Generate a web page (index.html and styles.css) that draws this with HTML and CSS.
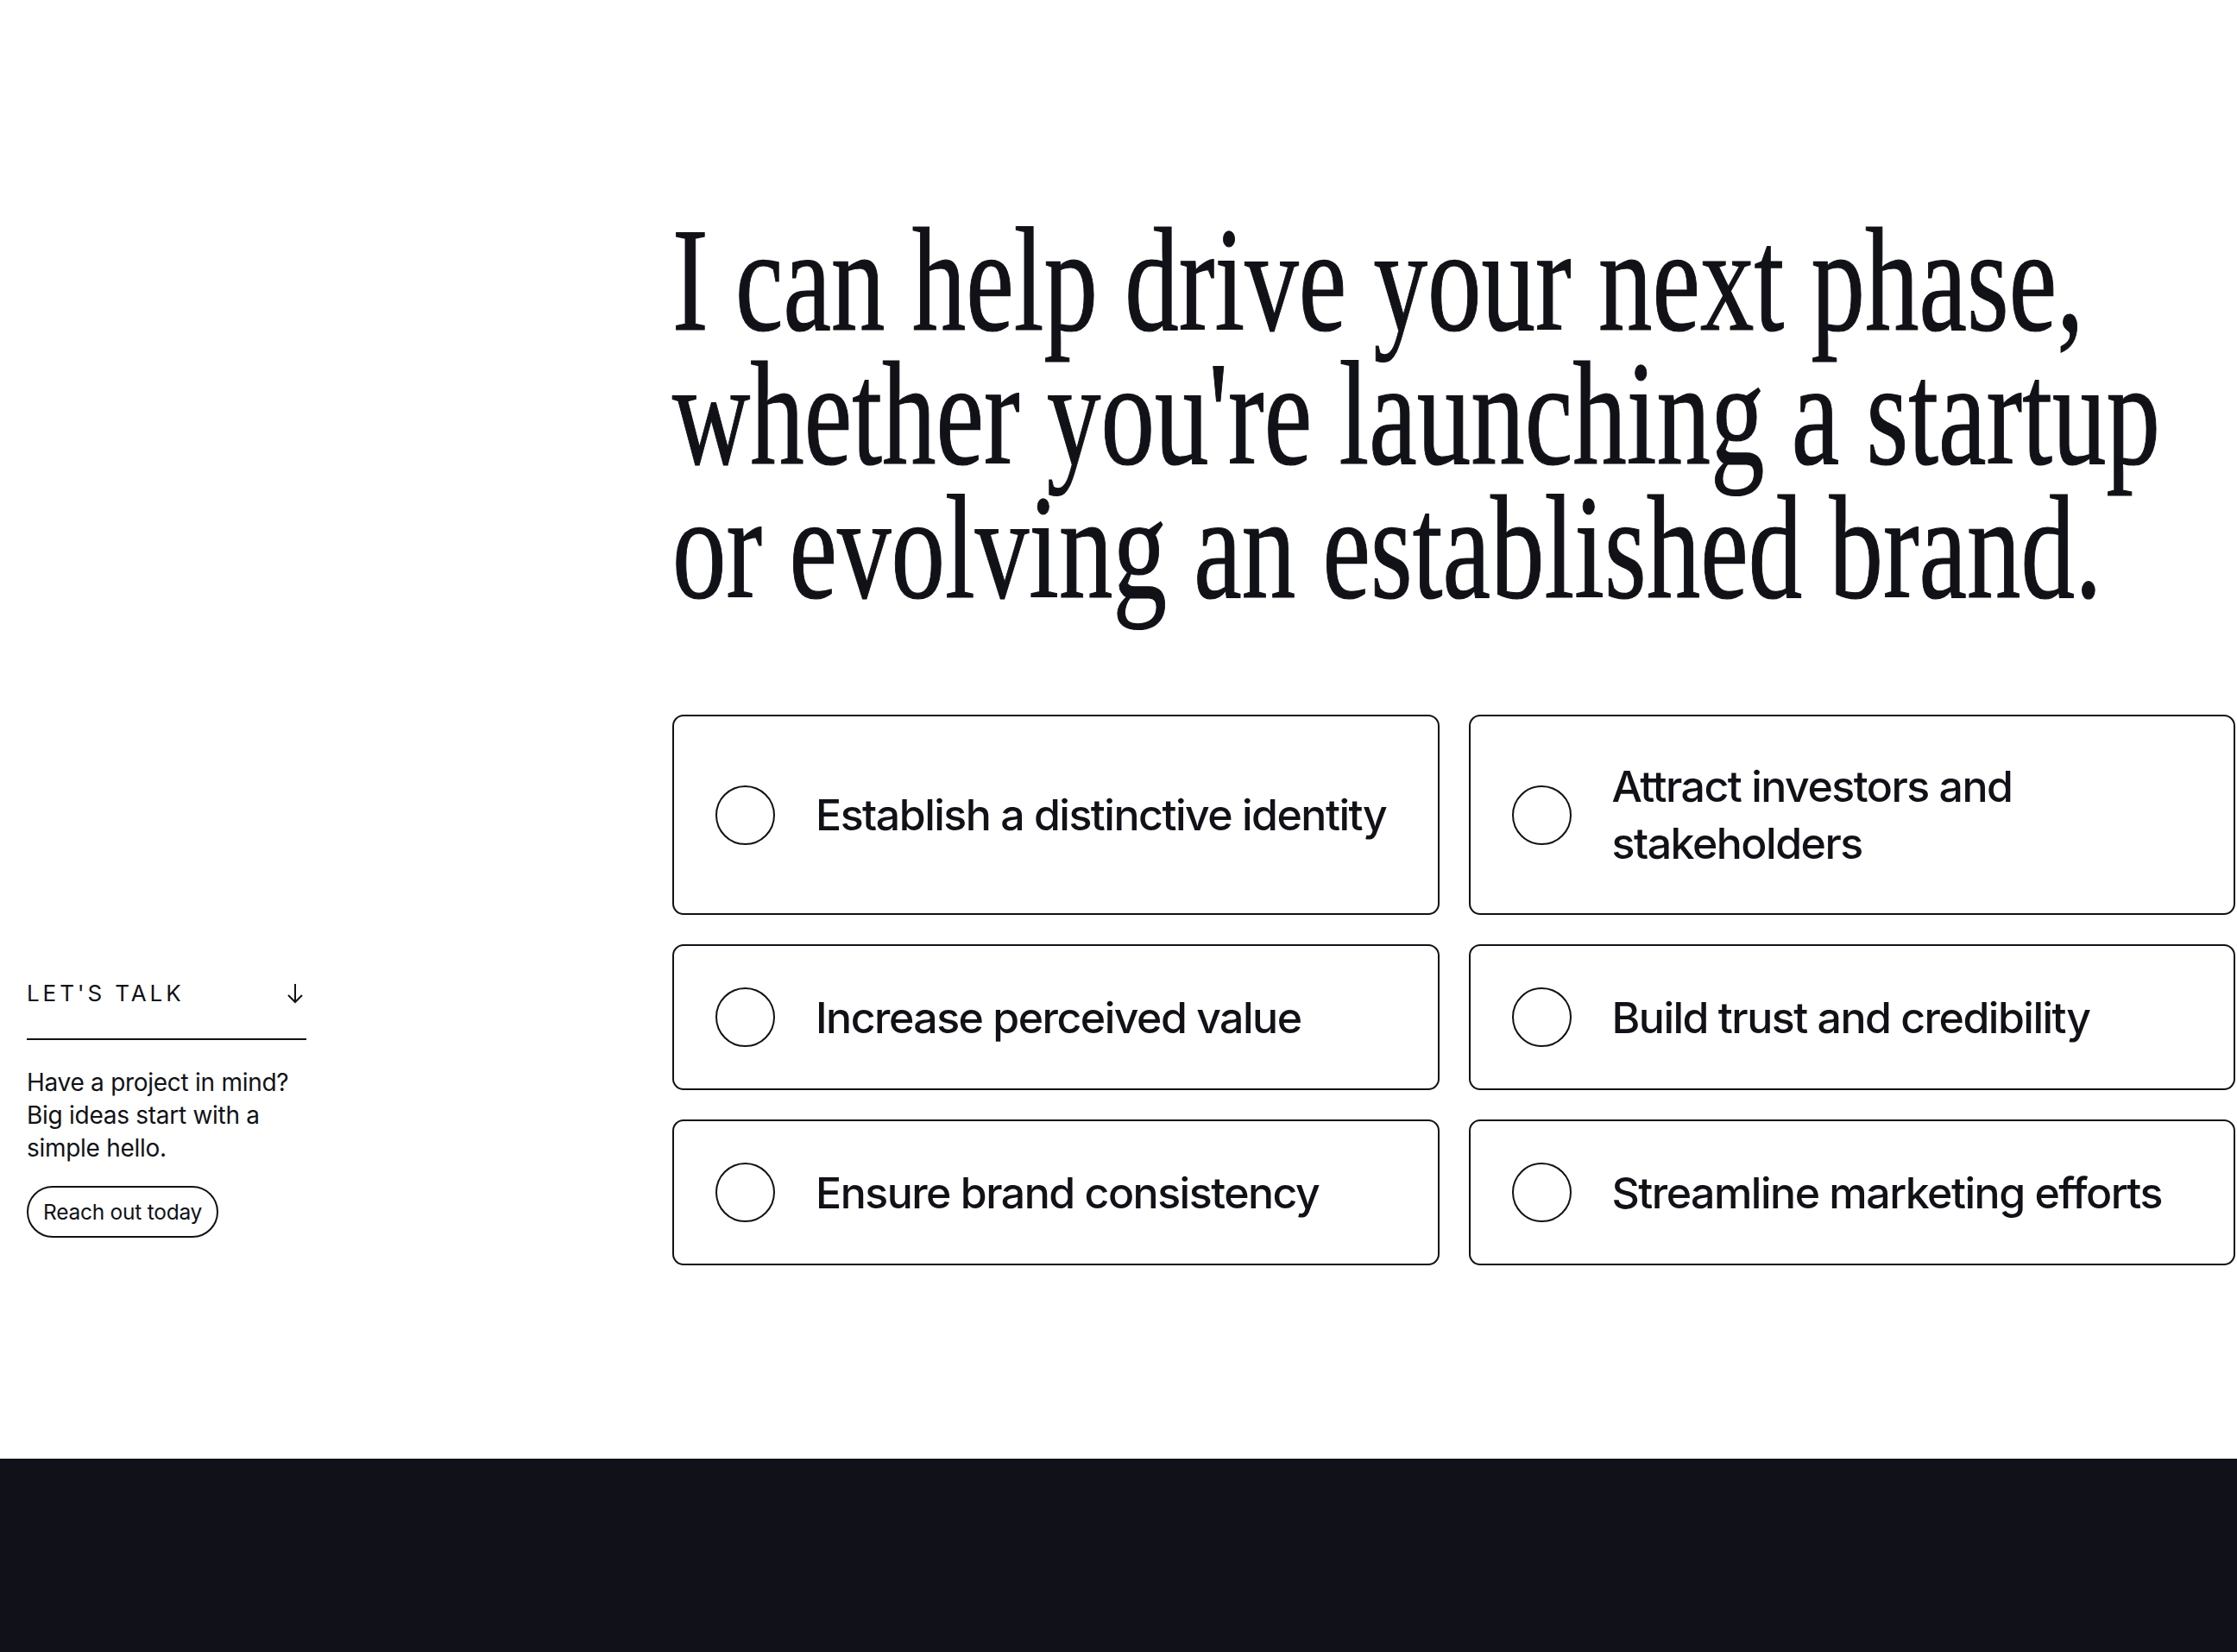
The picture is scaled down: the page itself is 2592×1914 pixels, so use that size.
FILE: index.html
```html
<!DOCTYPE html>
<html lang="en">
<head>
<meta charset="utf-8">
<title>Services</title>
<link rel="stylesheet" href="styles.css">
</head>
<body>
<main class="intro">
  <aside class="talk">
    <div class="talk-head">
      <span class="talk-label">LET'S TALK</span>
      <svg class="talk-arrow" viewBox="0 0 20 24" width="20" height="24" aria-hidden="true">
        <path d="M10 1 V22 M2 14 L10 22 L18 14" fill="none" stroke="#111118" stroke-width="2"/>
      </svg>
    </div>
    <p class="talk-text">Have a project in mind? Big ideas start with a simple hello.</p>
    <a class="talk-btn" href="#">Reach out today</a>
  </aside>
  <div class="content">
    <h1 class="headline">I can help drive your next phase,<br>whether you're launching a startup<br>or evolving an established brand.</h1>
    <ul class="goals">
      <li class="goal"><span class="goal-dot"></span><span class="goal-text">Establish a distinctive identity</span></li>
      <li class="goal"><span class="goal-dot"></span><span class="goal-text">Attract investors and<br>stakeholders</span></li>
      <li class="goal"><span class="goal-dot"></span><span class="goal-text">Increase perceived value</span></li>
      <li class="goal"><span class="goal-dot"></span><span class="goal-text">Build trust and credibility</span></li>
      <li class="goal"><span class="goal-dot"></span><span class="goal-text">Ensure brand consistency</span></li>
      <li class="goal"><span class="goal-dot"></span><span class="goal-text">Streamline marketing efforts</span></li>
    </ul>
  </div>
</main>
<footer class="dark"></footer>
</body>
</html>
```
FILE: styles.css
```css
html, body {
  margin: 0;
  padding: 0;
  background: #ffffff;
  overflow: hidden;
}
body {
  color: #111118;
  font-family: "Inter", "Liberation Sans", sans-serif;
}
.intro {
  display: grid;
  grid-template-columns: 324px 1fr;
  column-gap: 424px;
  padding: 247px 2px 224px 31px;
}
.talk {
  align-self: end;
  margin-bottom: 32px;
}
.talk-head {
  display: flex;
  justify-content: space-between;
  align-items: center;
  height: 32px;
  padding-bottom: 36px;
  border-bottom: 2px solid #111118;
}
.talk-label {
  font-size: 26px;
  line-height: 32px;
  letter-spacing: 0.15em;
}
.talk-arrow {
  margin-right: 3px;
}
.talk-text {
  margin: 30px 0 0;
  font-size: 28px;
  line-height: 38px;
  letter-spacing: -0.01em;
}
.talk-btn {
  display: inline-flex;
  align-items: center;
  height: 56px;
  margin-top: 25px;
  padding: 0 17px;
  border: 2px solid #111118;
  border-radius: 999px;
  color: #111118;
  text-decoration: none;
  font-size: 24.5px;
  letter-spacing: -0.01em;
}
.content {
  min-width: 0;
}
.headline {
  margin: 0 0 116px;
  font-family: "Liberation Serif", "Times New Roman", serif;
  font-weight: 400;
  font-size: 172px;
  line-height: 155px;
  white-space: nowrap;
  -webkit-text-stroke: 1.2px #111118;
  transform: scaleX(0.727);
  transform-origin: 0 0;
}
.goals {
  list-style: none;
  margin: 0;
  padding: 0;
  display: grid;
  grid-template-columns: 1fr 1fr;
  gap: 34px;
}
.goal {
  display: flex;
  align-items: center;
  gap: 47px;
  padding: 48px 20px 48px 48px;
  border: 2px solid #111118;
  border-radius: 13px;
}
.goal-dot {
  flex: none;
  box-sizing: border-box;
  width: 69px;
  height: 69px;
  border: 2px solid #111118;
  border-radius: 50%;
}
.goal-text {
  font-size: 50px;
  font-weight: 500;
  line-height: 66px;
  letter-spacing: -0.03em;
  white-space: nowrap;
}
.dark {
  height: 224px;
  background: #111119;
}
```
